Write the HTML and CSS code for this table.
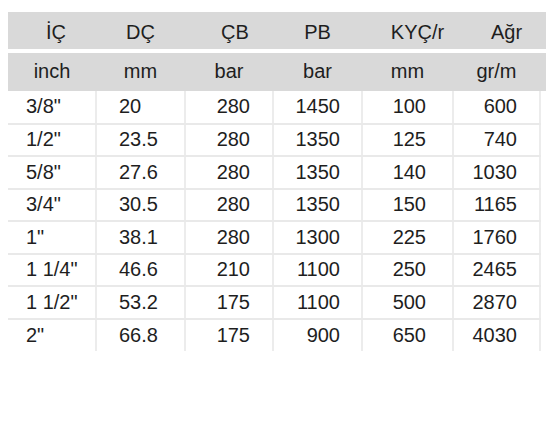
FILE: index.html
```html
<!DOCTYPE html>
<html lang="tr">
<head>
<meta charset="utf-8">
<title>Hortum Tablosu</title>
<link rel="stylesheet" href="styles.css">
</head>
<body>
<div class="sheet">
  <table class="spec">
    <colgroup>
      <col class="c1"><col class="c2"><col class="c3"><col class="c4"><col class="c5"><col class="c6"><col class="c7">
    </colgroup>
    <thead>
      <tr class="h1">
        <th class="a1">İÇ</th><th class="a2">DÇ</th><th class="a3">ÇB</th><th class="a4">PB</th><th class="a5">KYÇ/r</th><th class="a6">Ağr</th><th></th>
      </tr>
      <tr class="h2">
        <th>inch</th><th>mm</th><th>bar</th><th>bar</th><th>mm</th><th>gr/m</th><th></th>
      </tr>
    </thead>
    <tbody>
      <tr><td class="d1">3/8"</td><td class="d2">20</td><td class="d3">280</td><td class="d4">1450</td><td class="d5">100</td><td class="d6">600</td><td class="d7"></td></tr>
      <tr><td class="d1">1/2"</td><td class="d2">23.5</td><td class="d3">280</td><td class="d4">1350</td><td class="d5">125</td><td class="d6">740</td><td class="d7"></td></tr>
      <tr><td class="d1">5/8"</td><td class="d2">27.6</td><td class="d3">280</td><td class="d4">1350</td><td class="d5">140</td><td class="d6">1030</td><td class="d7"></td></tr>
      <tr><td class="d1">3/4"</td><td class="d2">30.5</td><td class="d3">280</td><td class="d4">1350</td><td class="d5">150</td><td class="d6">1165</td><td class="d7"></td></tr>
      <tr><td class="d1">1"</td><td class="d2">38.1</td><td class="d3">280</td><td class="d4">1300</td><td class="d5">225</td><td class="d6">1760</td><td class="d7"></td></tr>
      <tr><td class="d1">1 1/4"</td><td class="d2">46.6</td><td class="d3">210</td><td class="d4">1100</td><td class="d5">250</td><td class="d6">2465</td><td class="d7"></td></tr>
      <tr><td class="d1">1 1/2"</td><td class="d2">53.2</td><td class="d3">175</td><td class="d4">1100</td><td class="d5">500</td><td class="d6">2870</td><td class="d7"></td></tr>
      <tr><td class="d1">2"</td><td class="d2">66.8</td><td class="d3">175</td><td class="d4">900</td><td class="d5">650</td><td class="d6">4030</td><td class="d7"></td></tr>
    </tbody>
  </table>
</div>
</body>
</html>
```

FILE: styles.css
```css
html, body {
  margin: 0;
  padding: 0;
  background: #ffffff;
}

.sheet {
  padding: 12px 0 0 8px;
  font-family: "Liberation Sans", Arial, sans-serif;
  font-size: 20px;
  color: #1e1e1e;
}

.spec {
  width: 538px;
  border-collapse: collapse;
  border-spacing: 0;
  table-layout: fixed;
}

.c1 { width: 88px; }
.c2 { width: 89px; }
.c3 { width: 88px; }
.c4 { width: 89px; }
.c5 { width: 91px; }
.c6 { width: 87px; }
.c7 { width: 6px; }

.spec th {
  background: #d9d9d9;
  font-weight: normal;
  text-align: center;
  padding: 0;
  white-space: nowrap;
}

.h1 th {
  height: 39px;
  border-bottom: 4px solid #ffffff;
  padding-top: 3px;
  box-sizing: border-box;
}

.h2 th {
  height: 36px;
  padding-bottom: 2px;
}

.a1 { padding-left: 8px !important; }
.a3 { padding-left: 12px !important; }
.a5 { padding-left: 20px !important; }
.a6 { padding-left: 20px !important; }

.spec td {
  height: 32.5px;
  padding: 0;
  white-space: nowrap;
  border-bottom: 2px solid #e9e9e9;
  border-right: 2px solid #ececec;
  box-sizing: border-box;
}

.spec tbody tr:last-child td {
  border-bottom: none;
}

.spec td.d7 {
  border-right: none;
  border-bottom: none;
}

.d1 { text-align: left; padding-left: 18px !important; }
.d2 { text-align: left; padding-left: 22px !important; }
.d3 { text-align: right; padding-right: 22px !important; }
.d4 { text-align: right; padding-right: 21px !important; }
.d5 { text-align: right; padding-right: 26px !important; }
.d6 { text-align: right; padding-right: 22px !important; }
```
